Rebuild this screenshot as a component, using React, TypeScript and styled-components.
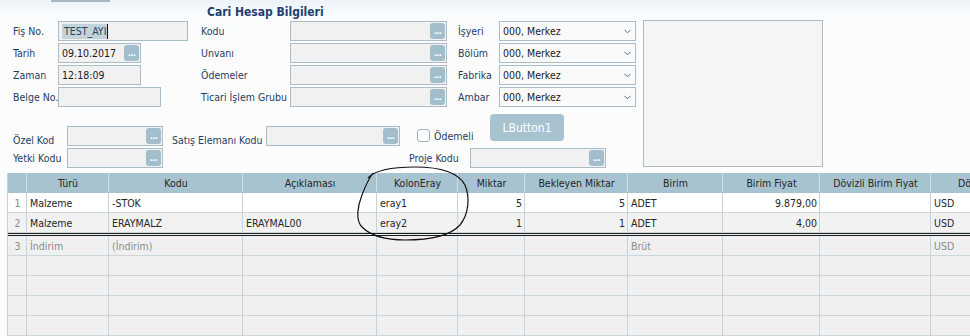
import React from 'react';
import styled, { createGlobalStyle } from 'styled-components';

const GlobalStyle = createGlobalStyle`
  html, body {
    margin: 0;
    padding: 0;
  }
  body {
    width: 970px;
    height: 336px;
    overflow: hidden;
    background: #fcfcfc;
    font-family: "DejaVu Sans Condensed", "DejaVu Sans", sans-serif;
    font-stretch: condensed;
    font-size: 10.5px;
    color: #1b1b1b;
  }
`;

const Page = styled.div`
  position: relative;
  width: 970px;
  height: 336px;
  overflow: hidden;
  background: linear-gradient(to bottom, #edf3f9 0px, #f9fbfd 14px, #fcfcfc 40px);
`;

const TabStrip = styled.div`
  height: 4px;
  display: flex;
  padding-left: 51px;
`;

const TabMarker = styled.div`
  width: 59px;
  height: 2px;
  background: #a6b7c1;
`;

const Form = styled.div`
  display: flex;
`;

const FieldsArea = styled.div`
  width: 636px;
  display: flex;
  flex-direction: column;
`;

const TopFields = styled.div`
  display: flex;
  padding-left: 13px;
`;

const Group = styled.div<{ $ml?: number; $titled?: boolean }>`
  display: flex;
  flex-direction: column;
  gap: 2px;
  margin-left: ${(p) => p.$ml ?? 0}px;
  padding-top: ${(p) => (p.$titled ? 0 : 17)}px;
`;

const Title = styled.div`
  height: 15px;
  display: flex;
  align-items: flex-end;
  padding-left: 6px;
  font-weight: bold;
  font-size: 12px;
  color: #1f3f70;
`;

const FieldRow = styled.div`
  display: flex;
  align-items: center;
  height: 20px;
`;

const Label = styled.span<{ $w: number; $ml?: number }>`
  width: ${(p) => p.$w}px;
  margin-left: ${(p) => p.$ml ?? 0}px;
  flex-shrink: 0;
  color: #1f3d60;
  white-space: nowrap;
`;

const InputBox = styled.div<{ $w: number }>`
  width: ${(p) => p.$w}px;
  height: 20px;
  box-sizing: border-box;
  flex-shrink: 0;
  border: 1px solid #a9bcc7;
  background: #f1f1f1;
  display: flex;
  align-items: center;
  padding: 0 1px 0 3px;
`;

const SelectBox = styled(InputBox)`
  background: #fafafa;
  padding: 0 4px 0 3px;
`;

const Value = styled.span`
  flex: 1;
  line-height: 16px;
  color: #1a1a1a;
  white-space: nowrap;
  overflow: hidden;
`;

const Selected = styled.span`
  display: inline-block;
  line-height: 15px;
  background: #c3d3dc;
  color: #2a4558;
  padding: 0 1px 0 2px;
  border-right: 1px solid #111;
`;

const DotsButton = styled.span`
  width: 15px;
  height: 16px;
  border-radius: 3px;
  background: #a2bdcb;
  color: #fff;
  font-size: 9px;
  font-weight: bold;
  display: flex;
  align-items: flex-end;
  justify-content: center;
  box-sizing: border-box;
  padding-bottom: 3px;
  line-height: 1;
  letter-spacing: -0.5px;
`;

const LowerFields = styled.div`
  display: flex;
  flex-direction: column;
  gap: 2px;
  margin-top: 7px;
  padding-left: 13px;
`;

const TallRow = styled.div`
  display: flex;
  align-items: flex-end;
  height: 32px;
`;

const CheckArea = styled.label`
  width: 73px;
  margin-left: 17px;
  margin-bottom: 4px;
  display: flex;
  align-items: center;
  gap: 4px;
  color: #1f3d60;
`;

const CheckBox = styled.span`
  width: 13px;
  height: 13px;
  box-sizing: border-box;
  border: 1px solid #9fb3bf;
  border-radius: 3px;
  background: #fff;
`;

const LButton = styled.div`
  align-self: flex-start;
  width: 74px;
  height: 27px;
  border-radius: 4px;
  background: #a8c3d0;
  color: #fff;
  font-size: 12px;
  display: flex;
  align-items: center;
  justify-content: center;
`;

const ImageBox = styled.div`
  width: 180px;
  height: 147px;
  margin: 16px 0 0 7px;
  box-sizing: border-box;
  border: 1px solid #b0bcc3;
  background: #f5f5f6;
`;

const GridWrap = styled.div`
  margin: 5px 0 0 7px;
  border-left: 1px solid #c5d3dc;
`;

const GridRow = styled.div<{ $bg: string; $double?: boolean; $header?: boolean }>`
  display: grid;
  grid-template-columns: ${() => columns.map((c) => `${c.w}px`).join(' ')};
  height: ${(p) => (p.$double ? 23 : 20)}px;
  box-sizing: border-box;
  background: ${(p) => p.$bg};
  border-top: ${(p) => (p.$double ? '3px double #1a1a1a' : 'none')};
  border-bottom: 1px solid ${(p) => (p.$header ? '#a7c3cf' : '#c9d6de')};
`;

const Cell = styled.div<{ $align?: string; $muted?: boolean; $header?: boolean }>`
  display: flex;
  align-items: center;
  justify-content: ${(p) =>
    p.$align === 'right' ? 'flex-end' : p.$align === 'center' ? 'center' : 'flex-start'};
  padding: 0 2px 0 3px;
  border-right: 1px solid ${(p) => (p.$header ? '#cfdfe6' : '#c5d3dc')};
  color: ${(p) => (p.$muted ? '#8c8c8c' : p.$header ? '#252525' : '#262626')};
  white-space: nowrap;
  overflow: hidden;
`;

const Annotation = styled.svg`
  position: absolute;
  left: 0;
  top: 0;
  pointer-events: none;
`;

type Col = { title: string; w: number; align?: string };

const columns: Col[] = [
  { title: '', w: 19, align: 'center' },
  { title: 'Türü', w: 82 },
  { title: 'Kodu', w: 134 },
  { title: 'Açıklaması', w: 134 },
  { title: 'KolonEray', w: 81 },
  { title: 'Miktar', w: 67, align: 'right' },
  { title: 'Bekleyen Miktar', w: 103, align: 'right' },
  { title: 'Birim', w: 95 },
  { title: 'Birim Fiyat', w: 97, align: 'right' },
  { title: 'Dövizli Birim Fiyat', w: 111 },
  { title: 'Döviz', w: 80 },
];

const rows = [
  { bg: '#ffffff', cells: ['1', 'Malzeme', '-STOK', '', 'eray1', '5', '5', 'ADET', '9.879,00', '', 'USD'] },
  { bg: '#f2f2f2', cells: ['2', 'Malzeme', 'ERAYMALZ', 'ERAYMAL00', 'eray2', '1', '1', 'ADET', '4,00', '', 'USD'] },
  { bg: '#f0f0f0', muted: true, double: true, cells: ['3', 'İndirim', '(İndirim)', '', '', '', '', 'Brüt', '', '', 'USD'] },
  { bg: '#f0f0f0', cells: [] as string[] },
  { bg: '#f0f0f0', cells: [] as string[] },
  { bg: '#f0f0f0', cells: [] as string[] },
  { bg: '#f0f0f0', cells: [] as string[] },
];

const Chevron = () => (
  <svg width="7" height="5" viewBox="0 0 7 5">
    <polyline points="0.5,0.8 3.5,3.8 6.5,0.8" fill="none" stroke="#4d6d86" strokeWidth="1" />
  </svg>
);

const Lookup: React.FC<{ w: number; value?: string }> = ({ w, value }) => (
  <InputBox $w={w}>
    <Value>{value}</Value>
    <DotsButton>...</DotsButton>
  </InputBox>
);

const Combo: React.FC<{ value: string }> = ({ value }) => (
  <SelectBox $w={137}>
    <Value>{value}</Value>
    <Chevron />
  </SelectBox>
);

const App: React.FC = () => {
  return (
    <Page>
      <GlobalStyle />
      <TabStrip>
        <TabMarker />
      </TabStrip>
      <Form>
        <FieldsArea>
          <TopFields>
            <Group>
              <FieldRow>
                <Label $w={45}>Fiş No.</Label>
                <InputBox $w={130}>
                  <Value>
                    <Selected>TEST_AYI</Selected>
                  </Value>
                </InputBox>
              </FieldRow>
              <FieldRow>
                <Label $w={45}>Tarih</Label>
                <Lookup w={83} value="09.10.2017" />
              </FieldRow>
              <FieldRow>
                <Label $w={45}>Zaman</Label>
                <InputBox $w={83}>
                  <Value>12:18:09</Value>
                </InputBox>
              </FieldRow>
              <FieldRow>
                <Label $w={45}>Belge No.</Label>
                <InputBox $w={103} />
              </FieldRow>
            </Group>
            <Group $ml={13} $titled>
              <Title>Cari Hesap Bilgileri</Title>
              <FieldRow>
                <Label $w={89}>Kodu</Label>
                <Lookup w={157} />
              </FieldRow>
              <FieldRow>
                <Label $w={89}>Unvanı</Label>
                <Lookup w={157} />
              </FieldRow>
              <FieldRow>
                <Label $w={89}>Ödemeler</Label>
                <Lookup w={157} />
              </FieldRow>
              <FieldRow>
                <Label $w={89}>Ticari İşlem Grubu</Label>
                <Lookup w={157} />
              </FieldRow>
            </Group>
            <Group $ml={11}>
              {['İşyeri', 'Bölüm', 'Fabrika', 'Ambar'].map((l) => (
                <FieldRow key={l}>
                  <Label $w={41}>{l}</Label>
                  <Combo value="000, Merkez" />
                </FieldRow>
              ))}
            </Group>
          </TopFields>
          <LowerFields>
            <TallRow>
              <Label $w={54}>Özel Kod</Label>
              <Lookup w={96} />
              <Label $w={94} $ml={9}>
                Satış Elemanı Kodu
              </Label>
              <Lookup w={134} />
              <CheckArea>
                <CheckBox />
                Ödemeli
              </CheckArea>
              <LButton>LButton1</LButton>
            </TallRow>
            <FieldRow>
              <Label $w={54}>Yetki Kodu</Label>
              <Lookup w={96} />
              <Label $w={61} $ml={246}>
                Proje Kodu
              </Label>
              <Lookup w={136} />
            </FieldRow>
          </LowerFields>
        </FieldsArea>
        <ImageBox />
      </Form>
      <GridWrap>
        <GridRow $bg="#a7c3cf" $header>
          {columns.map((c, i) => (
            <Cell key={i} $align="center" $header>
              {c.title}
            </Cell>
          ))}
        </GridRow>
        {rows.map((r, ri) => (
          <GridRow key={ri} $bg={r.bg} $double={r.double}>
            {columns.map((c, ci) => (
              <Cell key={ci} $align={c.align} $muted={r.muted || ci === 0}>
                {r.cells[ci] ?? ''}
              </Cell>
            ))}
          </GridRow>
        ))}
      </GridWrap>
      <Annotation width="970" height="336" viewBox="0 0 970 336">
        <path
          d="M 368 178 C 375 170, 395 167, 415 167 C 440 167, 458 172, 465 185 C 470 197, 469 214, 460 225 C 450 236, 430 240, 405 240 C 385 240, 370 235, 362 227 C 355 220, 358 205, 362 195 C 365 187, 368 180, 373 173"
          fill="none"
          stroke="#111"
          strokeWidth="1.2"
        />
      </Annotation>
    </Page>
  );
};

export default App;
